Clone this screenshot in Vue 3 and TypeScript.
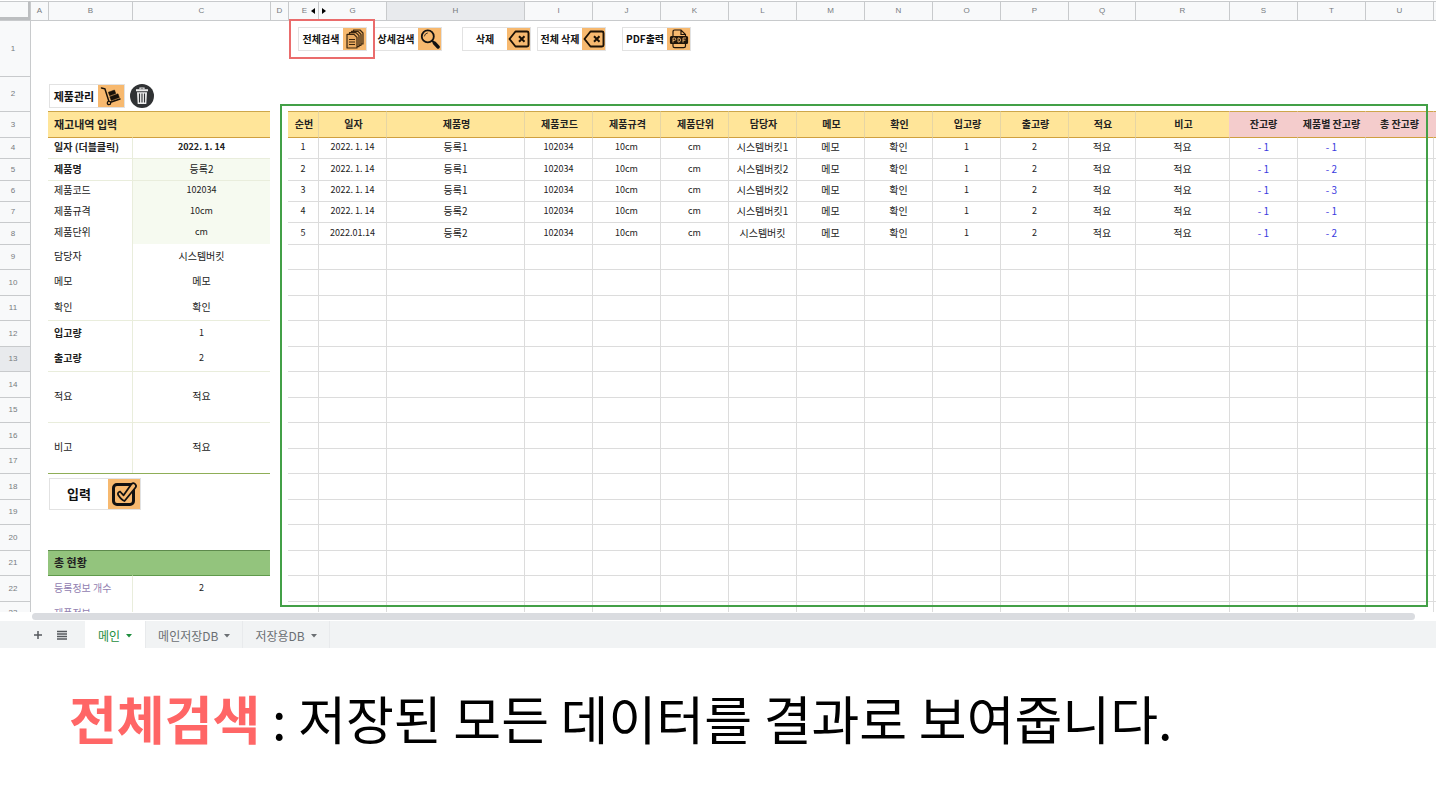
<script setup lang="ts">
interface LeftCell {
  text: string
  cls: string
  colspan?: number
  rowspan?: number
  submit?: boolean
}

interface SheetRow {
  n: number
  size: string
  left: LeftCell[]
  data: string[]
}

const letters = ['A', 'B', 'C', 'D', 'E', 'G', 'H', 'I', 'J', 'K', 'L', 'M', 'N', 'O', 'P', 'Q', 'R', 'S', 'T', 'U']
const colClasses = ['w-num', 'w-18', 'w-84', 'w-138', 'w-18', 'w-30', 'w-68', 'w-138', 'w-68', 'w-68', 'w-68', 'w-68', 'w-68', 'w-68', 'w-68', 'w-68', 'w-67', 'w-94', 'w-68', 'w-68', 'w-68', 'w-3']

const headings = ['순번', '일자', '제품명', '제품코드', '제품규격', '제품단위', '담당자', '메모', '확인', '입고량', '출고량', '적요', '비고', '잔고량', '제품별 잔고량', '총 잔고량']

const records: string[][] = [
  ['1', '2022. 1. 14', '등록1', '102034', '10cm', 'cm', '시스템버킷1', '메모', '확인', '1', '2', '적요', '적요', '- 1', '- 1', ''],
  ['2', '2022. 1. 14', '등록1', '102034', '10cm', 'cm', '시스템버킷2', '메모', '확인', '1', '2', '적요', '적요', '- 1', '- 2', ''],
  ['3', '2022. 1. 14', '등록1', '102034', '10cm', 'cm', '시스템버킷2', '메모', '확인', '1', '2', '적요', '적요', '- 1', '- 3', ''],
  ['4', '2022. 1. 14', '등록2', '102034', '10cm', 'cm', '시스템버킷1', '메모', '확인', '1', '2', '적요', '적요', '- 1', '- 1', ''],
  ['5', '2022.01.14', '등록2', '102034', '10cm', 'cm', '시스템버킷', '메모', '확인', '1', '2', '적요', '적요', '- 1', '- 2', ''],
]

const pair = (label: string, value: string, cls = '', valueCls = '', rowspan = 1): LeftCell[] => [
  { text: label, cls: `label ${cls}`, rowspan },
  { text: value, cls: `value ${valueCls}`, rowspan },
]

const leftCells: Record<number, LeftCell[]> = {
  4: pair('일자 (더블클릭)', '2022. 1. 14', 'strong gold', 'strong gold'),
  5: pair('제품명', '등록2', 'strong line', 'tint line'),
  6: pair('제품코드', '102034', 'line', 'tint line'),
  7: pair('제품규격', '10cm', '', 'tint'),
  8: pair('제품단위', 'cm', '', 'tint'),
  9: pair('담당자', '시스템버킷'),
  10: pair('메모', '메모'),
  11: pair('확인', '확인'),
  12: pair('입고량', '1', 'strong line', 'line'),
  13: pair('출고량', '2', 'strong'),
  14: pair('적요', '적요', 'line', 'line', 2),
  15: [],
  16: pair('비고', '적요', 'line', 'line', 2),
  17: [],
  18: [{ text: '입력', cls: 'submit-cell', colspan: 2, rowspan: 2, submit: true }],
  19: [],
  20: [{ text: '', cls: '', colspan: 2 }],
  21: [{ text: '총 현황', cls: 'label summary', colspan: 2 }],
  22: pair('등록정보 개수', '2', 'purple green-line', 'green-line'),
  23: pair('제품정보', '', 'purple'),
}

const sizes: Record<number, string> = { 4: 'h21', 5: 'h22', 6: 'h21', 7: 'h21', 8: 'h22', 23: 'cut' }

const rows: SheetRow[] = Array.from({ length: 20 }, (_, i) => {
  const n = i + 4
  return {
    n,
    size: sizes[n] ?? (n % 2 ? 'h25' : 'h26'),
    left: leftCells[n],
    data: records[i] ?? headings.map(() => ''),
  }
})

const tools = [
  { name: '전체검색', icon: 'docs', cls: 'marked' },
  { name: '상세검색', icon: 'search', cls: '' },
  { name: '삭제', icon: 'delete', cls: 'apart' },
  { name: '전체 삭제', icon: 'delete', cls: '' },
  { name: 'PDF출력', icon: 'pdf', cls: 'apart-small' },
]

const tabs = [
  { name: '메인', active: true },
  { name: '메인저장DB', active: false },
  { name: '저장용DB', active: false },
]

const isNumeric = (s: string) => /^[\d\s.cm]+$/.test(s)
</script>

<template>
  <main class="page">
    <section class="sheet">
      <table class="grid">
        <colgroup>
          <col v-for="(c, i) in colClasses" :key="i" :class="c" />
        </colgroup>
        <thead>
          <tr class="letters">
            <td class="corner"></td>
            <th v-for="l in letters" :key="l" scope="col" :class="{ picked: l === 'H' }">
              <span v-if="l === 'E'" class="fold">E <svg width="4" height="6" viewBox="0 0 4 6"><path d="M4 0v6L0 3z" /></svg></span>
              <span v-else-if="l === 'G'" class="unfold"><svg width="4" height="6" viewBox="0 0 4 6"><path d="M0 0v6l4-3z" /></svg><span>G</span></span>
              <template v-else>{{ l }}</template>
            </th>
            <td class="rest"></td>
          </tr>
        </thead>
        <tbody>
          <tr class="h56">
            <th scope="row">1</th>
            <td colspan="4" class="first"></td>
            <td colspan="17" class="tool-cell">
              <div class="toolbar">
                <button v-for="t in tools" :key="t.name" type="button" class="tool" :class="t.cls">
                  <span class="name">{{ t.name }}</span>
                  <span class="pic">
                    <svg v-if="t.icon === 'docs'" width="20" height="20" viewBox="0 0 20 20" fill="#e9aa60" stroke="#3a260f" stroke-width="1.2" stroke-linejoin="round">
                      <path d="M8.500 1h6.500l3 3v11H8.500z" />
                      <path d="M6.500 2.300h6.500l3 3v11H6.500z" />
                      <path d="M4.500 3.700h6.500l3 3v11H4.500z" />
                      <path d="M2 5.300h7l3 3v10.700H2z" />
                      <path d="M4 10.500h6M4 13h6M4 15.500h6" stroke-width="1" />
                    </svg>
                    <svg v-else-if="t.icon === 'search'" width="20" height="20" viewBox="0 0 20 20" fill="none" stroke="#111" stroke-linecap="round">
                      <circle cx="7.8" cy="7.4" r="6" stroke-width="1.8" />
                      <path d="M4.4 7a3.5 3.5 0 0 1 3-3" stroke-width="0.8" />
                      <path d="M12.2 11.8l1.6 1.6" stroke-width="2" />
                      <path d="M14.4 14l3.7 4" stroke-width="3.4" />
                    </svg>
                    <svg v-else-if="t.icon === 'delete'" width="22" height="20" viewBox="0 0 22 20" fill="none" stroke="#1c1206" stroke-linejoin="round">
                      <path d="M7.500 2.500H19q1.500 0 1.500 1.500v12q0 1.500-1.500 1.500H7.500L1.500 10z" stroke-width="1.9" />
                      <path d="M11 7.200l5.500 5.600M16.500 7.200L11 12.800" stroke-width="2" />
                    </svg>
                    <svg v-else width="20" height="20" viewBox="0 0 20 20" fill="none" stroke="#20150a" stroke-width="1.2">
                      <path d="M4 8V2.700q0-1.700 1.700-1.700H12L16.500 5.500v2.500M12 1v4.500h4.500M4 14v3q0 1.700 1.700 1.700h9q1.800 0 1.800-1.700V14" />
                      <rect x="1.5" y="7.500" width="17" height="7" rx="1" fill="#20150a" />
                      <path d="M4 13.500V9h1.500q1.300 0 1.300 1.200t-1.300 1.200H4M9 9v4h.8q1.700 0 1.700-2T9.800 9zM14 13.500V9h3M14 11.200h2.400" stroke="#f7b96f" stroke-width="0.9" />
                    </svg>
                  </span>
                </button>
              </div>
            </td>
          </tr>
          <tr class="h35">
            <th scope="row">2</th>
            <td class="first"></td>
            <td colspan="20" class="manage-cell">
              <div class="manage">
                <button type="button" class="tool wide">
                  <span class="name">제품관리</span>
                  <span class="pic">
                    <svg width="22" height="20" viewBox="0 0 22 20">
                      <path d="M1.500 2l3.400.8L8.800 15M10.500 16.300l9.500-3.300" fill="none" stroke="#17110a" stroke-width="1.500" stroke-linecap="round" />
                      <path d="M8.300 6.200l6.200-2.200 1.300 3.600-6.200 2.200zM9.800 10.800l8.200-3 1.400 3.800-8.200 3z" fill="#17110a" stroke="#17110a" stroke-width="0.500" />
                      <circle cx="9" cy="17" r="1.700" fill="#f7b96f" stroke="#17110a" stroke-width="1.300" />
                    </svg>
                  </span>
                </button>
                <button type="button" class="trash" aria-label="삭제">
                  <svg width="24" height="24" viewBox="0 0 24 24">
                    <circle cx="12" cy="12" r="12" fill="#303234" />
                    <path d="M10 5.200V4h4v1.200" fill="none" stroke="#eee" stroke-width="1.200" />
                    <path d="M6 5.300h12v2H6zM7 8.300h10l-.7 11.700H7.700z" fill="#eee" />
                    <path d="M9.500 9.500v9M12 9.500v9M14.500 9.500v9" stroke="#303234" stroke-width="1.100" />
                  </svg>
                </button>
              </div>
            </td>
          </tr>
          <tr class="h26">
            <th scope="row">3</th>
            <td class="first"></td>
            <th scope="colgroup" colspan="2" class="entry-title">재고내역 입력</th>
            <td></td>
            <th v-for="(h, i) in headings" :key="h" scope="col" class="heading" :class="{ pink: i > 12, open: i === 0 }">{{ h }}</th>
            <td class="heading pink"></td>
          </tr>
          <tr v-for="row in rows" :key="row.n" :class="row.size">
            <th scope="row" :class="{ picked: row.n === 13 }"><div class="in">{{ row.n }}</div></th>
            <td class="first"></td>
            <td v-for="(c, i) in row.left" :key="i" :class="[c.cls, { num: c.text && isNumeric(c.text) }]" :colspan="c.colspan" :rowspan="c.rowspan">
              <button v-if="c.submit" type="button" class="tool submit">
                <span class="name">{{ c.text }}</span>
                <span class="pic">
                  <svg width="28" height="28" viewBox="0 0 28 28" fill="none" stroke="#111" stroke-linejoin="round" stroke-linecap="round">
                    <rect x="3.500" y="4.500" width="20" height="20" rx="3.500" stroke-width="3" />
                    <path d="M10 11.500l3.600 3.800L21.500 4q2-2 3.800.2t-.6 4.300L14.500 21q-3-1-6.300-6-1-2.600 1.800-3.500z" fill="#f7b96f" stroke-width="1.8" />
                  </svg>
                </span>
              </button>
              <div v-else class="in">{{ c.text }}</div>
            </td>
            <td></td>
            <td v-for="(d, i) in row.data" :key="'d' + i" class="cell" :class="{ open: i === 0, gold: row.n === 4, blue: i > 12, num: isNumeric(d) }">{{ d }}</td>
            <td class="cell" :class="{ gold: row.n === 4 }"></td>
          </tr>
        </tbody>
      </table>
      <div class="frame"></div>
    </section>
    <div class="scroll"><div class="thumb"></div></div>
    <nav class="tabs">
      <button type="button" class="mini" aria-label="시트 추가">
        <svg width="10" height="10" viewBox="0 0 10 10"><path d="M5 1v8M1 5h8" stroke="#55595d" stroke-width="1.500" /></svg>
      </button>
      <button type="button" class="mini" aria-label="모든 시트">
        <svg width="10" height="10" viewBox="0 0 10 10"><path d="M0 1.500h10M0 4h10M0 6.500h10M0 9h10" stroke="#55595d" stroke-width="1.500" /></svg>
      </button>
      <button v-for="t in tabs" :key="t.name" type="button" class="tab" :class="{ active: t.active }">
        {{ t.name }}
        <svg width="6" height="4" viewBox="0 0 6 4"><path d="M0 0h6L3 3.500z" fill="currentColor" /></svg>
      </button>
    </nav>
    <p class="caption"><strong>전체검색</strong> : 저장된 모든 데이터를 결과로 보여줍니다.</p>
  </main>
</template>

<style>
body {
  margin: 0;
  background: #fff;
}
</style>

<style scoped>
.page {
  font-family: "Noto Sans CJK KR", "Liberation Sans", sans-serif;
  color: #222;
  overflow: hidden;
}
.sheet {
  position: relative;
  padding-top: 1px;
}
.grid {
  width: 100%;
  table-layout: fixed;
  border-collapse: separate;
  border-spacing: 0;
  font-size: 10px;
  line-height: 16px;
}
.grid th,
.grid td {
  box-sizing: border-box;
  padding: 0;
  white-space: nowrap;
}
.w-num, .w-30 { width: 30px; }
.w-18 { width: 18px; }
.w-84 { width: 84px; }
.w-138 { width: 138px; }
.w-68 { width: 68px; }
.w-67 { width: 67px; }
.w-94 { width: 94px; }
.w-3 { width: 3px; }

.letters { height: 19px; }
.h21 { height: 21px; }
.h22 { height: 22px; }
.h25 { height: 25px; }
.h26 { height: 26px; }
.h35 { height: 35px; }
.h56 { height: 56px; }
.cut { height: 11px; }
.cut .in {
  height: 10px;
  line-height: 22px;
  overflow: hidden;
}

.letters th,
.letters .rest,
.grid th[scope="row"] {
  background: #f8f9fa;
  color: #777b80;
  font: 8px/10px "Liberation Sans", Arial, sans-serif;
  text-align: center;
}
.letters th,
.letters .rest {
  border-top: 1px solid #c8cacc;
  border-left: 1px solid #c8cacc;
}
.grid th[scope="row"] {
  border-top: 1px solid #c8cacc;
  padding-right: 4px;
}
.grid .cut th[scope="row"] .in { line-height: 22px; }
.grid th.picked,
.grid th[scope="row"].picked { background: #e8eaed; }
.corner {
  background: #f8f9fa;
  border-top: 1px solid #c8cacc;
  border-right: 2px solid #bcbec0;
  border-bottom: 3px solid #bcbec0;
}
.fold {
  display: flex;
  align-items: center;
  justify-content: flex-end;
  gap: 4px;
  padding-right: 3px;
}
.fold svg, .unfold svg { fill: #000; }
.unfold {
  display: flex;
  align-items: center;
  padding-left: 3px;
}
.unfold span {
  flex: 1;
  padding-right: 7px;
}
.h56 td { border-top: 1px solid #c8cacc; }
.first { border-left: 1px solid #c8cacc; }

.tool-cell { vertical-align: top; }
.toolbar {
  display: flex;
  padding: 6px 0 0 10px;
  gap: 6px;
}
.tool {
  position: relative;
  box-sizing: border-box;
  display: flex;
  align-items: center;
  width: 69px;
  height: 24px;
  padding: 0;
  border: 1px solid #e2e2e2;
  background: #fff;
  color: #111;
  font: 700 10px/16px "Noto Sans CJK KR", "Liberation Sans", sans-serif;
  white-space: nowrap;
}
.tool .name {
  flex: 1;
  text-align: center;
}
.tool .pic {
  display: flex;
  align-items: center;
  justify-content: center;
  width: 23px;
  height: 22px;
  background: #f7b96f;
}
.apart { margin-left: 14px; }
.apart-small { margin-left: 10px; }
.marked { z-index: 1; }
.marked::after {
  content: "";
  position: absolute;
  inset: -9px -9px -9px -10px;
  border: 2px solid #ea6c6c;
}
.tool.wide {
  width: 76px;
  font-size: 11px;
}
.tool.wide .pic { width: 26px; }
.manage-cell { vertical-align: top; }
.manage {
  display: flex;
  align-items: center;
  gap: 5px;
  padding: 8px 0 0 1px;
}
.trash {
  display: flex;
  width: 24px;
  height: 24px;
  padding: 0;
  border: 0;
  background: none;
}
.submit-cell {
  border-top: 1px solid #8fae57;
  vertical-align: top;
}
.tool.submit {
  width: 92px;
  height: 32px;
  margin: 4px 0 0 1px;
  font-size: 13px;
}
.tool.submit .pic {
  width: 32px;
  height: 30px;
}

.entry-title {
  border-top: 1px solid #cda64a;
  background: #ffe599;
  text-align: left;
  font-size: 11px;
}
.grid .entry-title,
.grid .label { padding-left: 6px; }
.grid .entry-title,
.grid .heading,
.grid .label,
.grid .value,
.grid .cell { padding-bottom: 2px; }
.grid .cut td { padding-bottom: 0; }
.heading {
  border-top: 1px solid #cda64a;
  border-left: 1px solid #e6d5a4;
  background: #ffe599;
  text-align: center;
}
.grid .heading:not(.pink) { padding-left: 2px; }
.heading.pink {
  background: #f4cccc;
  border-left-color: #f4cccc;
}
.value {
  border-left: 1px solid #e9eddc;
  text-align: center;
}
.tint { background: #f6faf0; }
.strong { font-weight: 700; }
.line { border-top: 1px solid #e9eddc; }
.purple { color: #9180b0; }
.summary {
  border-top: 1px solid #5d8a4c;
  background: #93c47d;
  font-size: 11px;
  font-weight: 700;
}
.green-line { border-top: 1px solid #5f9a4b; }
.cell {
  border-top: 1px solid #dcdcdc;
  border-left: 1px solid #dcdcdc;
  text-align: center;
}
.grid .cell.open,
.grid .heading.open { border-left: 0; }
.grid .gold { border-top: 1px solid #cfa040; }
.num { font-size: 9px; }
.blue { color: #3b3be0; }
.frame {
  position: absolute;
  left: 19.5%;
  right: 8px;
  top: 104px;
  bottom: 5px;
  border: 2px solid #43a047;
  pointer-events: none;
}

.scroll {
  padding: 1px 21px 1px 32px;
}
.thumb {
  height: 7px;
  border-radius: 4px;
  background: #dadce0;
}
.tabs {
  display: flex;
  height: 27px;
  padding-left: 26px;
  background: #f1f3f4;
}
.mini {
  display: flex;
  align-items: center;
  justify-content: center;
  width: 24px;
  padding: 0;
  border: 0;
  background: none;
}
.tab {
  display: flex;
  align-items: center;
  gap: 6px;
  padding: 2px 12px 0 12px;
  border: 0;
  border-right: 1px solid #e8eaec;
  background: none;
  color: #6b6f73;
  font: 12px/16px "Noto Sans CJK KR", "Liberation Sans", sans-serif;
}
.tab.active {
  margin-left: 11px;
  padding-left: 13px;
  padding-right: 13px;
  background: #fff;
  color: #1e8e3e;
}
.caption {
  margin: 0;
  padding: 32px 0 0 69px;
  color: #000;
  font-size: 52px;
  line-height: 76px;
  white-space: nowrap;
}
.caption strong {
  color: #ff6666;
  font-weight: 700;
}
</style>
